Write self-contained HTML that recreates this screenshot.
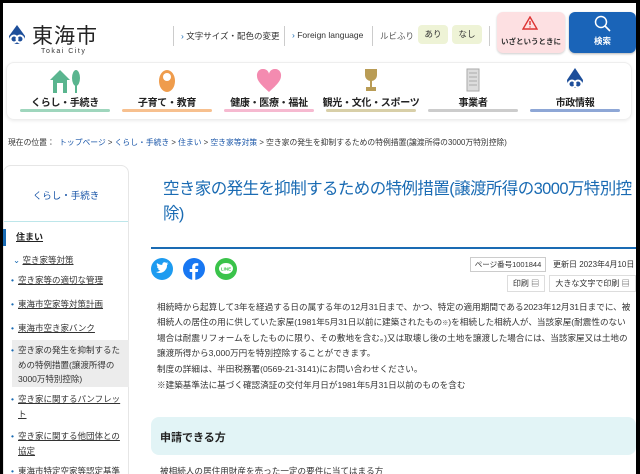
<!DOCTYPE html>
<html><head><meta charset="utf-8"><style>
*{margin:0;padding:0;box-sizing:border-box}
body{width:640px;height:474px;overflow:hidden;background:#000;font-family:"Liberation Sans","Noto Sans CJK JP",sans-serif;color:#333;position:relative}
#pg{position:absolute;left:3px;top:3px;width:633px;height:471px;background:#fff;overflow:hidden}
.a{position:absolute;white-space:nowrap}
a{color:#1a56a8}
.nav{position:absolute;left:3px;top:59px;width:626px;height:58px;border:1px solid #eee;border-radius:8px;box-shadow:0 1px 3px rgba(0,0,0,.08)}
.ni{position:absolute;top:0;width:90px;text-align:center}
.ni .l{position:absolute;top:31px;left:-10px;width:110px;font-size:10px;color:#222;font-weight:bold;white-space:nowrap;letter-spacing:-0.3px}
.ni .b{position:absolute;top:46px;left:0;width:90px;height:3px;border-radius:2px}
.side{position:absolute;left:0;top:162px;width:126px;height:320px;border:1px solid #e6e6e6;border-radius:8px 8px 0 0}
.si{position:absolute;font-size:8.5px;color:#333;line-height:14.5px;left:14px;width:108px}
.si u{text-decoration:underline}
.si:before{content:"•";color:#1a6bb3;position:absolute;left:-7px}
.body{position:absolute;left:154px;top:297px;width:480px;font-size:8.6px;line-height:15.4px;color:#333;white-space:nowrap}
</style></head><body><div id="pg">
<svg class="a" style="left:2px;top:21px" width="24" height="24" viewBox="0 0 24 24"><path d="M12 1 L20 12 A8 8 0 1 1 4 12Z" fill="#1d4e9a"/><circle cx="9" cy="15" r="3.5" fill="none" stroke="#fff" stroke-width="2"/><circle cx="15" cy="15" r="3.5" fill="none" stroke="#fff" stroke-width="2"/></svg>
<div class="a" style="left:29px;top:17px;font-size:21px;color:#222;letter-spacing:1px">東海市</div>
<div class="a" style="left:38px;top:45px;font-size:7px;letter-spacing:1.5px;color:#333">Tokai City</div>
<div class="a" style="left:170px;top:23px;width:1px;height:20px;background:#ccc"></div>
<div class="a" style="left:178px;top:27px;font-size:8.5px;color:#333"><span style="color:#1a6bb3">›</span> 文字サイズ・配色の変更</div>
<div class="a" style="left:281px;top:23px;width:1px;height:20px;background:#ccc"></div>
<div class="a" style="left:289px;top:27px;font-size:8.5px;color:#333"><span style="color:#1a6bb3">›</span> Foreign language</div>
<div class="a" style="left:369px;top:23px;width:1px;height:20px;background:#ccc"></div>
<div class="a" style="left:377px;top:27px;font-size:8.5px;color:#555">ルビふり</div>
<div class="a" style="left:415px;top:22px;width:30px;height:19px;background:#eef3d6;border-radius:4px;font-size:8.5px;text-align:center;line-height:19px">あり</div>
<div class="a" style="left:449px;top:22px;width:30px;height:19px;background:#eef3d6;border-radius:4px;font-size:8.5px;text-align:center;line-height:19px">なし</div>
<div class="a" style="left:486px;top:23px;width:1px;height:20px;background:#ccc"></div>
<div class="a" style="left:494px;top:9px;width:68px;height:41px;background:#fde0e2;border-radius:6px;box-shadow:0 1px 2px rgba(0,0,0,.2)"></div>
<svg class="a" style="left:519px;top:13px" width="16" height="14" viewBox="0 0 16 14"><path d="M8 1 L15 13 H1Z" fill="none" stroke="#d33" stroke-width="1.4"/><path d="M8 5v4M8 10.5v1" stroke="#d33" stroke-width="1.4"/></svg>
<div class="a" style="left:494px;top:33px;width:68px;text-align:center;font-size:7.5px;font-weight:bold;color:#333">いざというときに</div>
<div class="a" style="left:566px;top:9px;width:67px;height:41px;background:#1a64b8;border-radius:6px;box-shadow:0 1px 2px rgba(0,0,0,.3)"></div>
<svg class="a" style="left:591px;top:12px" width="17" height="17" viewBox="0 0 17 17"><circle cx="7" cy="7" r="5.5" fill="none" stroke="#fff" stroke-width="1.5"/><path d="M11 11l5 5" stroke="#fff" stroke-width="1.6"/></svg>
<div class="a" style="left:566px;top:32px;width:67px;text-align:center;font-size:8.5px;font-weight:bold;color:#fff">検索</div>
<div class="nav">
<div class="ni" style="left:13px"><svg style="margin-top:5px" width="34" height="26" viewBox="0 0 34 26"><path d="M2 12 L12 2 L22 12 H19 V25 H5 V12Z" fill="#5ab58f"/><rect x="9" y="15" width="6" height="10" fill="#fff"/><ellipse cx="28" cy="10" rx="4" ry="8" fill="#5ab58f"/><rect x="27" y="16" width="2" height="9" fill="#5ab58f"/></svg><div class="l">くらし・手続き</div><div class="b" style="background:#9fd6bd"></div></div>
<div class="ni" style="left:115px"><svg style="margin-top:4px" width="20" height="26" viewBox="0 0 20 26"><ellipse cx="10" cy="14" rx="8" ry="11" fill="#ef9c4c"/><circle cx="10" cy="10" r="4" fill="#fff"/></svg><div class="l">子育て・教育</div><div class="b" style="background:#f7c08f"></div></div>
<div class="ni" style="left:217px"><svg style="margin-top:6px" width="26" height="24" viewBox="0 0 26 24"><path d="M13 23 C4 15 1 11 1 7 A6 6 0 0 1 13 5 A6 6 0 0 1 25 7 C25 11 22 15 13 23Z" fill="#f48bb0"/></svg><div class="l">健康・医療・福祉</div><div class="b" style="background:#f6b9d0"></div></div>
<div class="ni" style="left:319px"><svg style="margin-top:4px" width="20" height="26" viewBox="0 0 20 26"><path d="M4 2 H16 V8 A6 6 0 0 1 4 8Z" fill="#b99c55"/><rect x="9" y="13" width="2" height="7" fill="#b99c55"/><rect x="5" y="20" width="10" height="4" fill="#b99c55"/></svg><div class="l">観光・文化・スポーツ</div><div class="b" style="background:#d8cfa8"></div></div>
<div class="ni" style="left:421px"><svg style="margin-top:4px" width="20" height="26" viewBox="0 0 20 26"><rect x="4" y="2" width="12" height="22" fill="#ddd" stroke="#aaa"/><path d="M6 6h8M6 10h8M6 14h8M6 18h8" stroke="#aaa"/></svg><div class="l">事業者</div><div class="b" style="background:#ccc"></div></div>
<div class="ni" style="left:523px"><svg style="margin-top:4px" width="24" height="26" viewBox="0 0 24 26"><path d="M12 1 L20 13 A8 8 0 1 1 4 13Z" fill="#1d4e9a"/><circle cx="9" cy="17" r="3.5" fill="none" stroke="#fff" stroke-width="2"/><circle cx="15" cy="17" r="3.5" fill="none" stroke="#fff" stroke-width="2"/></svg><div class="l">市政情報</div><div class="b" style="background:#8ea7d6"></div></div>
</div>
<div class="a" style="left:5px;top:134px;font-size:7.8px;color:#333">現在の位置：&nbsp; <a>トップページ</a> &gt; <a>くらし・手続き</a> &gt; <a>住まい</a> &gt; <a>空き家等対策</a> &gt; 空き家の発生を抑制するための特例措置(譲渡所得の3000万特別控除)</div>
<div class="side">
<div class="a" style="left:0;width:124px;top:22px;text-align:center;font-size:9.5px"><a>くらし・手続き</a></div>
<div class="a" style="left:0;top:55px;width:124px;height:1px;background:#bde6ea"></div>
<div class="a" style="left:-1px;top:63px;width:3px;height:17px;background:#1a6bb3"></div>
<div class="a" style="left:12px;top:64px;font-size:9px;font-weight:bold;color:#222"><u>住まい</u></div>
<div class="a" style="left:9px;top:88px;font-size:8.5px;color:#333"><span style="color:#1a6bb3">⌄</span> <u>空き家等対策</u></div>
<div class="si" style="top:107px"><u>空き家等の適切な管理</u></div>
<div class="si" style="top:131px"><u>東海市空家等対策計画</u></div>
<div class="si" style="top:155px"><u>東海市空き家バンク</u></div>
<div class="a" style="left:8px;top:174px;width:117px;height:47px;background:#ececec"></div>
<div class="si" style="top:177px">空き家の発生を抑制するための特例措置(譲渡所得の3000万特別控除)</div>
<div class="si" style="top:226px"><u>空き家に関するパンフレット</u></div>
<div class="si" style="top:263px"><u>空き家に関する他団体との協定</u></div>
<div class="si" style="top:298px"><u>東海市特定空家等認定基準</u></div>
</div>
<div class="a" style="left:160px;top:174px;font-size:16.5px;line-height:25px;color:#1a6bb3;white-space:normal;width:472px;letter-spacing:-0.6px">空き家の発生を抑制するための特例措置(譲渡所得の3000万特別控除)</div>
<div class="a" style="left:148px;top:244px;width:485px;height:2px;background:#1a6bb3"></div>
<svg class="a" style="left:148px;top:255px" width="22" height="22" viewBox="0 0 22 22"><circle cx="11" cy="11" r="11" fill="#1d9bf0"/><path d="M5 14c3 2 8 1 10-3 1-1 1-3 1-4l1.5-1.5-1.8.3 1.2-1.5-1.8.6c-1.5-1.5-4-.5-3.8 2C9 7 7 6 6 5c-.6 1.5 0 3 1 3.5H6c0 1.3 1 2 2 2.4H7c.4 1 1.3 1.6 2.3 1.6C8 13.5 6.5 14 5 14z" fill="#fff"/></svg>
<svg class="a" style="left:180px;top:255px" width="22" height="22" viewBox="0 0 22 22"><circle cx="11" cy="11" r="11" fill="#1877f2"/><path d="M12.3 22V14h2.5l.4-3h-2.9V9.2c0-.8.3-1.4 1.4-1.4h1.6V5.2c-.3 0-1.2-.1-2.3-.1-2.3 0-3.8 1.4-3.8 3.9V11H6.7v3h2.5v8z" fill="#fff"/></svg>
<svg class="a" style="left:212px;top:255px" width="22" height="22" viewBox="0 0 22 22"><circle cx="11" cy="11" r="11" fill="#3ac34a"/><ellipse cx="11" cy="10.5" rx="7" ry="5.5" fill="#fff"/><text x="11" y="12.5" font-size="4.5" text-anchor="middle" fill="#3ac34a" font-family="Liberation Sans" font-weight="bold">LINE</text></svg>
<div class="a" style="left:467px;top:254px;width:76px;height:15px;border:1px solid #ccc;font-size:7.5px;line-height:13px;text-align:center;color:#333">ページ番号1001844</div>
<div class="a" style="left:550px;top:256px;font-size:8px;color:#333">更新日 2023年4月10日</div>
<div class="a" style="left:504px;top:272px;width:38px;height:17px;border:1px solid #ddd;font-size:8px;line-height:15px;text-align:center">印刷 ▤</div>
<div class="a" style="left:546px;top:272px;width:87px;height:17px;border:1px solid #ddd;font-size:8px;line-height:15px;text-align:center">大きな文字で印刷 ▤</div>
<div class="body">相続時から起算して3年を経過する日の属する年の12月31日まで、かつ、特定の適用期間である2023年12月31日までに、被<br>相続人の居住の用に供していた家屋(1981年5月31日以前に建築されたもの<span style="font-size:6px;line-height:0;vertical-align:baseline">※</span>)を相続した相続人が、当該家屋(耐震性のない<br>場合は耐震リフォームをしたものに限り、その敷地を含む。)又は取壊し後の土地を譲渡した場合には、当該家屋又は土地の<br>譲渡所得から3,000万円を特別控除することができます。<br>制度の詳細は、半田税務署(0569-21-3141)にお問い合わせください。<div style="margin-top:1px">※建築基準法に基づく確認済証の交付年月日が1981年5月31日以前のものを含む</div></div>
<div class="a" style="left:148px;top:414px;width:485px;height:38px;background:#e2f4f6;border-radius:8px"></div>
<div class="a" style="left:157px;top:426px;font-size:11px;font-weight:bold;color:#222">申請できる方</div>
<div class="a" style="left:157px;top:462px;font-size:8.6px;color:#333">被相続人の居住用財産を売った一定の要件に当てはまる方</div>
</div></body></html>
